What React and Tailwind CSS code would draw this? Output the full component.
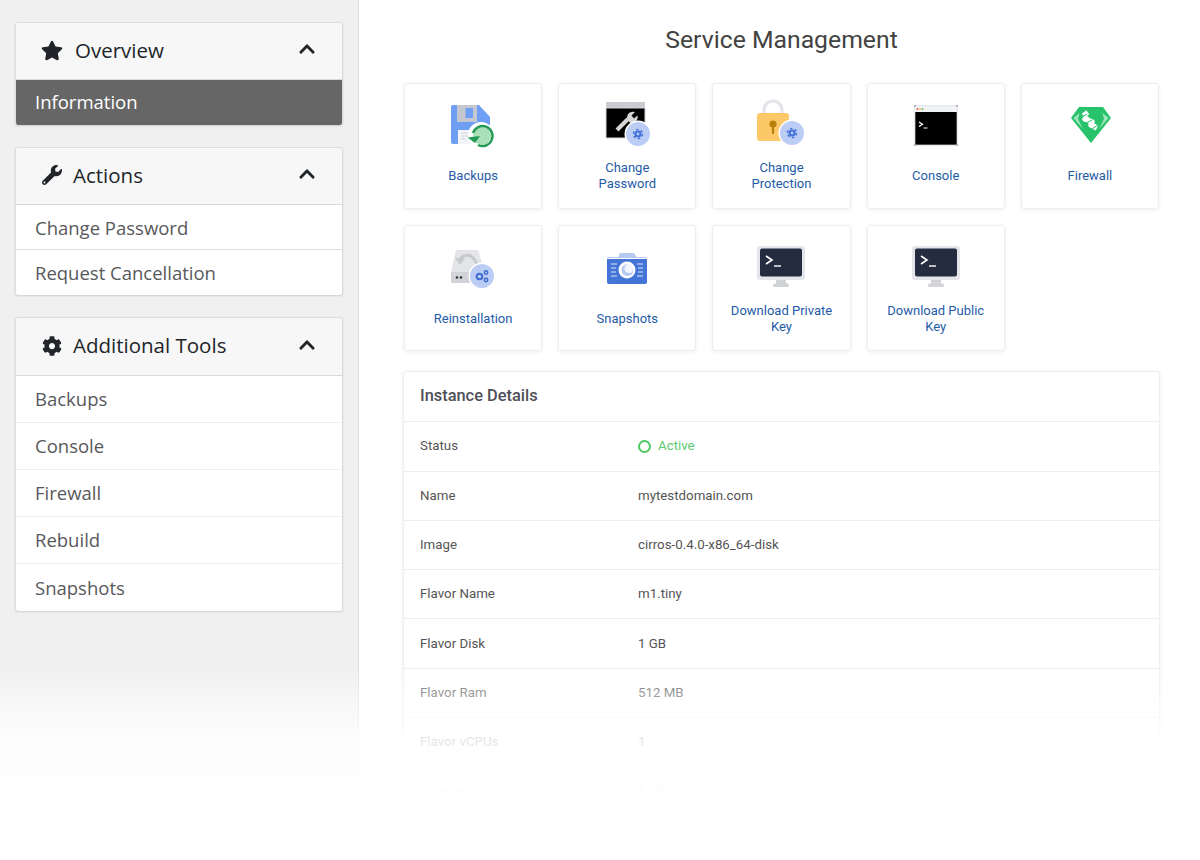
import React from "react";
import { FaStar, FaWrench, FaCog, FaChevronUp } from "react-icons/fa";

const Gear = ({ cx, cy, r = 12 }) => (
  <g>
    <circle cx={cx} cy={cy} r={r + 1.5} fill="#fff" />
    <circle cx={cx} cy={cy} r={r} fill="#bccdf5" />
    <circle cx={cx} cy={cy} r="3.6" fill="#4070d8" />
    <circle cx={cx} cy={cy} r="4.6" fill="none" stroke="#4070d8" strokeWidth="1.4" strokeDasharray="2.4 2.4" />
    <circle cx={cx} cy={cy} r="1.4" fill="#bccdf5" />
  </g>
);

const BackupsIcon = () => (
  <svg width="48" height="48" viewBox="0 0 48 48">
    <path d="M4 3h26l11 12v25a2 2 0 0 1-2 2H4a2 2 0 0 1-2-2V5a2 2 0 0 1 2-2z" fill="#6f9ff5" />
    <path d="M8 3h20v17H8z" fill="#c4c7cf" />
    <path d="M16.5 6h7.5v10h-7.500z" fill="#6f9ff5" />
    <path d="M9 28h24v14H9z" fill="#f3f4f7" />
    <path d="M12 31h9M12 34h7M12 37h5" stroke="#cfd3da" strokeWidth="1" />
    <circle cx="32" cy="33" r="13" fill="#fff" />
    <circle cx="33" cy="34" r="9" fill="#a8e0ba" />
    <path d="M24 31A10 10 0 1 1 29 43" fill="none" stroke="#259a56" strokeWidth="2.4" />
    <path d="M18.5 35.5L31 34l-5 7z" fill="#259a56" />
  </svg>
);

const PasswordIcon = () => (
  <svg width="48" height="48" viewBox="0 0 48 48">
    <path d="M3 0h39v6H3z" fill="#c9cbd0" />
    <path d="M3 6h39v30H3z" fill="#000" stroke="#d4d6da" strokeWidth="1" />
    <path d="M14 28l11-11" stroke="#d6d6d6" strokeWidth="4" />
    <path d="M24 16a6 6 0 0 1 8-6l-3.500 3.500 2.500 3 3.500-3a6 6 0 0 1-8 7z" fill="#d6d6d6" />
    <Gear cx={35} cy={32} />
  </svg>
);

const LockIcon = () => (
  <svg width="48" height="48" viewBox="0 0 48 48" className="overflow-visible">
    <path d="M7 13V8a9 9 0 0 1 18 0v5" fill="none" stroke="#e2e4ea" strokeWidth="3.2" />
    <rect x="0" y="11" width="32" height="28" rx="3" fill="#fdc968" />
    <circle cx="16" cy="22" r="3.6" fill="#b8810c" />
    <rect x="14.8" y="23" width="2.4" height="9" rx="1.2" fill="#b8810c" />
    <Gear cx={35} cy={31} />
  </svg>
);

const ConsoleIcon = () => (
  <svg width="48" height="48" viewBox="0 0 48 48">
    <rect x="3" y="4" width="42" height="39" fill="#000" stroke="#c4c7ce" strokeWidth="0.8" />
    <path d="M3 4h42v6H3z" fill="#f1f2f4" />
    <circle cx="5.5" cy="7" r="0.9" fill="#e8534f" />
    <circle cx="8" cy="7" r="0.9" fill="#f0c04a" />
    <circle cx="10.5" cy="7" r="0.9" fill="#58bb6a" />
    <path d="M3 3v2M45 3v2M3 42v2M45 42v2" stroke="#9a9ea6" strokeWidth="1.4" />
    <path d="M7 20l3.500 2.300L7 24.500" fill="none" stroke="#fff" strokeWidth="1.3" />
    <path d="M11.5 26h4" stroke="#fff" strokeWidth="1" />
  </svg>
);

const FirewallIcon = () => (
  <svg width="48" height="48" viewBox="0 0 48 48">
    <path d="M13 5h24l8 11-20 25L5 16z" fill="#27c26a" />
    <path d="M7.500 16l6-5-1.500 6 5 10z" fill="#9fe6bd" />
    <path d="M42.500 16l-6-5 1.500 6-5 10z" fill="#9fe6bd" />
    <path d="M18 10l3 4M21 14l-2 3 7 3-1 3 6 3" fill="none" stroke="#fff" strokeWidth="5.5" strokeLinejoin="round" />
    <path d="M16 15l5-3M20 21l6-3M26 27l6-4" stroke="#27c26a" strokeWidth="1" />
  </svg>
);

const ReinstallIcon = () => (
  <svg width="48" height="48" viewBox="0 0 48 48">
    <path d="M7 5h22l7 22v9a2 2 0 0 1-2 2H4a2 2 0 0 1-2-2v-9z" fill="#e4e5e8" />
    <path d="M2 27h34v9a2 2 0 0 1-2 2H4a2 2 0 0 1-2-2z" fill="#d1d3d8" />
    <path d="M11 15a8 8 0 0 1 14-1l3 5" fill="none" stroke="#c7c9ce" strokeWidth="3" />
    <path d="M6 13h10l-5 7z" fill="#c7c9ce" />
    <circle cx="8" cy="32.5" r="1.3" fill="#333" />
    <circle cx="12" cy="32.5" r="1.3" fill="#333" />
    <circle cx="33" cy="31" r="13.5" fill="#fff" />
    <circle cx="33" cy="31" r="12" fill="#bccdf5" />
    <circle cx="30.5" cy="31.5" r="2.8" fill="none" stroke="#3f6cd0" strokeWidth="2" />
    <circle cx="37" cy="27.5" r="1.7" fill="none" stroke="#3f6cd0" strokeWidth="1.5" />
    <circle cx="37" cy="35" r="1.7" fill="none" stroke="#3f6cd0" strokeWidth="1.5" />
  </svg>
);

const SnapshotsIcon = () => (
  <svg width="48" height="48" viewBox="0 0 48 48">
    <path d="M15 13l2-5h14l3 5z" fill="#b6c9f2" />
    <path d="M4 12.5h40" stroke="#b6c9f2" strokeWidth="1" />
    <path d="M4 14h40v23a2 2 0 0 1-2 2H6a2 2 0 0 1-2-2z" fill="#4474d6" />
    <path d="M8 19h6M8 23h5M8 27h5M8 31h6M34 19h6M35 23h5M35 27h5M34 31h6" stroke="#dfe7fa" strokeWidth="1.1" />
    <circle cx="24" cy="25" r="8.5" fill="#fff" />
    <circle cx="24.5" cy="25" r="6" fill="#b6c9f2" />
    <circle cx="26" cy="23.5" r="4.5" fill="#f3f6fd" />
  </svg>
);

const KeyIcon = () => (
  <svg width="48" height="48" viewBox="0 0 48 48">
    <rect x="0" y="1" width="48" height="34" rx="3" fill="#e4e6ec" />
    <rect x="3" y="3.5" width="42" height="28" rx="2" fill="#262c40" />
    <path d="M9 11l6 4-6 4" fill="none" stroke="#fff" strokeWidth="1.6" />
    <path d="M17 21h7" stroke="#fff" strokeWidth="1.4" />
    <path d="M19 35h10v4H19z" fill="#d2d3d7" />
    <rect x="16" y="38.5" width="16" height="3.5" rx="1.7" fill="#d2d3d7" />
  </svg>
);

const services = [
  { label: "Backups", Icon: BackupsIcon },
  { label: "Change Password", Icon: PasswordIcon, narrow: true },
  { label: "Change Protection", Icon: LockIcon, narrow: true },
  { label: "Console", Icon: ConsoleIcon },
  { label: "Firewall", Icon: FirewallIcon },
  { label: "Reinstallation", Icon: ReinstallIcon },
  { label: "Snapshots", Icon: SnapshotsIcon },
  { label: "Download Private Key", Icon: KeyIcon },
  { label: "Download Public Key", Icon: KeyIcon },
];

const details = [
  ["Name", "mytestdomain.com"],
  ["Image", "cirros-0.4.0-x86_64-disk"],
  ["Flavor Name", "m1.tiny"],
  ["Flavor Disk", "1 GB"],
  ["Flavor Ram", "512 MB"],
  ["Flavor vCPUs", "1"],
  ["Volume Size", "5 GB"],
];

function SidePanel({ icon, title, gap, head = "h-[57px]", children }) {
  return (
    <div className="rounded-[3px] border-x border-t border-[#ddd] bg-white overflow-hidden shadow-[0_1px_2px_rgba(0,0,0,0.14)]">
      <div className={`${head} flex items-center bg-[#f7f7f7] border-b border-[#d8d8d8] pl-[25px] pr-[26px] pb-[2px] text-[#212529]`}>
        <span className={`w-[22px] flex justify-center ${gap}`}>{icon}</span>
        <span className="text-[20.5px]">{title}</span>
        <FaChevronUp size={18} className="ml-auto mb-[2px]" />
      </div>
      {children}
    </div>
  );
}

function SideItem({ label }) {
  return (
    <div className="flex items-center h-[47px] px-[19px] text-[18.5px] text-[#58595b] border-b border-[#efefef] last:border-b-0">
      {label}
    </div>
  );
}

export default function App() {
  return (
    <div className="relative h-[860px] w-[1200px] overflow-hidden flex bg-white font-['Roboto',sans-serif]">
      {/* Sidebar */}
      <aside className="w-[359px] shrink-0 bg-[#f0f0f0] border-r border-[#ddd] pt-[22px] pl-[15px] pr-[15px] font-['Open_Sans',sans-serif] flex flex-col gap-[22px]">
        <SidePanel icon={<FaStar size={23} />} title="Overview" gap="mr-[12px]">
          <div className="h-[45px] flex items-center px-[19px] pb-[2px] bg-[#666] text-white text-[18.5px] font-medium">
            Information
          </div>
        </SidePanel>
        <SidePanel icon={<FaWrench size={20} />} title="Actions" gap="mr-[10px]">
          <div className="flex items-center h-[45px] px-[19px] pt-[2px] text-[18.5px] text-[#58595b] border-b border-[#ddd]">Change Password</div>
          <div className="flex items-center h-[45px] px-[19px] text-[18.5px] text-[#58595b]">Request Cancellation</div>
        </SidePanel>
        <SidePanel icon={<FaCog size={20} />} title="Additional Tools" gap="mr-[10px]" head="h-[58px]">
          {["Backups", "Console", "Firewall", "Rebuild", "Snapshots"].map((item) => (
            <SideItem key={item} label={item} />
          ))}
        </SidePanel>
      </aside>

      {/* Main */}
      <main className="flex-1 pl-[45px] pr-[41px]">
        <h1 className="text-[24.75px] leading-[28px] text-[#424242] text-center pt-[26px] mb-[29px]">Service Management</h1>

        <div className="grid grid-cols-5 gap-x-[16px] gap-y-[16px]">
          {services.map(({ label, Icon, narrow }, i) => (
            <div key={label} className={`h-[126px] rounded-[3px] border border-[#eceef2] bg-white shadow-[0_1px_4px_rgba(40,50,80,0.08)] flex flex-col items-center ${i > 4 ? "pt-[19px]" : "pt-[18px]"}`}>
              <Icon />
              <div className={`mt-[10px] h-[32px] flex items-center justify-center text-center text-[13px] leading-[16px] text-[#1f5ba8] ${narrow ? "px-[34px]" : "px-[14px]"}`}>
                {label}
              </div>
            </div>
          ))}
        </div>

        <div className="mt-[19.5px] -mx-[1px] rounded-[3px] border border-[#eceef2] shadow-[0_1px_4px_rgba(40,50,80,0.08)]">
          <div className="h-[50px] flex items-center px-[16px] text-[16.4px] font-medium text-[#4f4f57] border-b border-[#eceef2]">
            Instance Details
          </div>
          <div className="h-[50px] flex items-center text-[13.3px] border-b border-[#eceef2]">
            <div className="w-[234px] pl-[16px] text-[#555]">Status</div>
            <div className="flex items-center gap-[7px] text-[#5cc96e]">
              <span className="w-[13px] h-[13px] rounded-full border-2 border-[#4fc764]" />
              Active
            </div>
          </div>
          {details.map(([name, value]) => (
            <div key={name} className="h-[49.3px] flex items-center text-[13.3px] text-[#555] border-b border-[#eceef2]">
              <div className="w-[234px] pl-[16px]">{name}</div>
              <div>{value}</div>
            </div>
          ))}
        </div>
      </main>

      {/* Fade out at the bottom of the page */}
      <div className="pointer-events-none absolute left-0 right-0 top-[665px] bottom-0 bg-[linear-gradient(to_bottom,rgba(255,255,255,0)_0%,rgba(255,255,255,0.4)_14%,rgba(255,255,255,0.85)_39%,rgba(255,255,255,0.98)_64%,#fff_70%)]" />
    </div>
  );
}
